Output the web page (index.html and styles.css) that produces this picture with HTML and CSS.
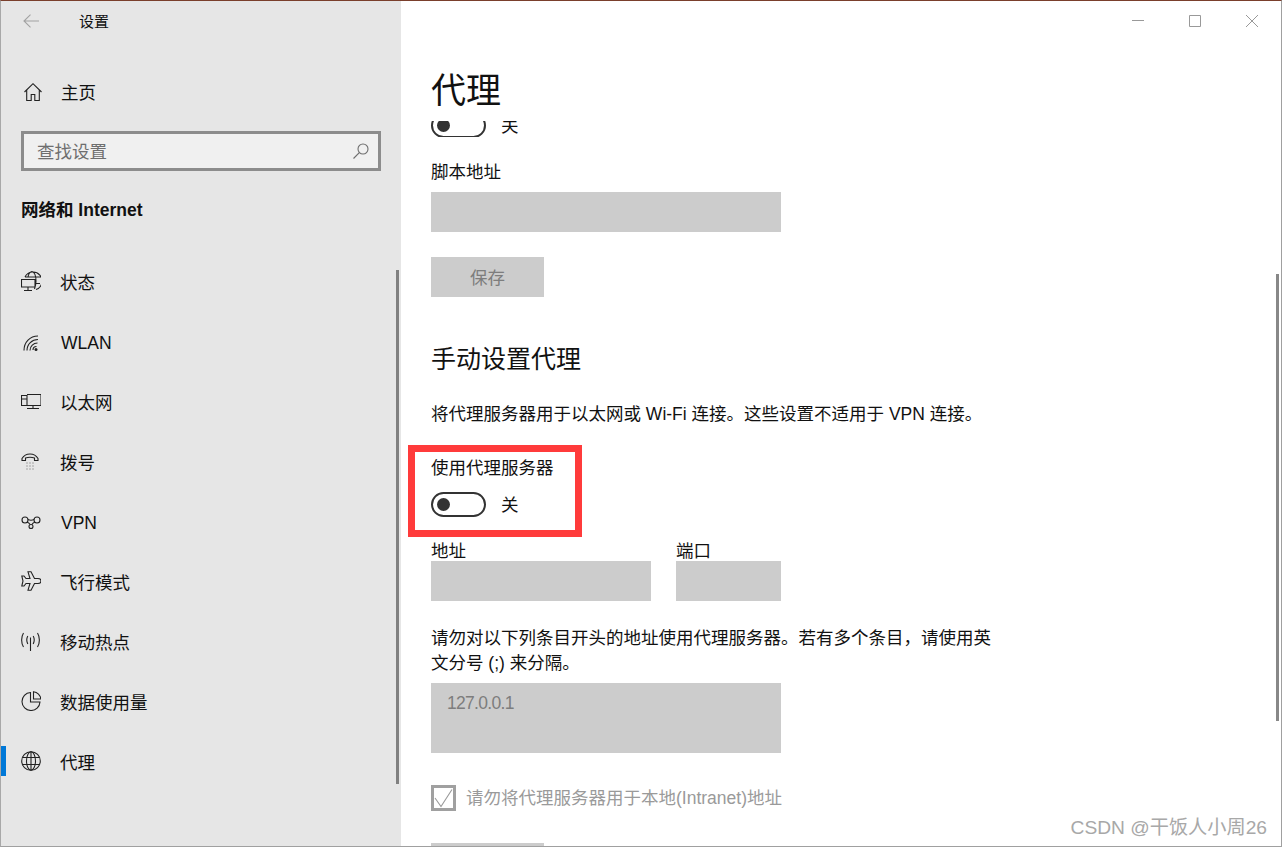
FILE: index.html
```html
<!DOCTYPE html>
<html lang="zh-CN">
<head>
<meta charset="utf-8">
<title>设置</title>
<link rel="stylesheet" href="styles.css">
</head>
<body>
<div class="window">
  <aside class="sidebar">
    <div class="titlebar">
      <svg class="back" width="16" height="14" viewBox="0 0 16 14"><path d="M7.500 .7 1 7l6.500 6.300M1 7h15" /></svg>
      <span class="apptitle">设置</span>
    </div>
    <div class="home">
      <svg class="ico" width="20" height="20" viewBox="0 0 20 20"><path d="M1.500 10 10 1.700 18.500 10M3.700 8v10.500h4.500v-6h3.600v6h4.500V8"/></svg>
      <span>主页</span>
    </div>
    <div class="search">
      <span class="search-text">查找设置</span>
      <svg class="search-ico" width="16" height="16" viewBox="0 0 16 16"><circle cx="10" cy="6" r="5"/><path d="M6.300 9.700 .5 15.500"/></svg>
    </div>
    <div class="group">网络和 Internet</div>
    <nav class="nav">
      <div class="item">
        <svg class="ico" width="20" height="20" viewBox="0 0 20 20"><path d="M4 6a9 9 0 1 1 11 12.500M7 6c.5-3 2-5 4-5.500 3 1 4 5 4 9.500 0 3-.5 5-1.500 8M4 6h15.500M15 12.500h4M.5 8.500h13.500v7.500H.5zM7 16v3M3 19.500h8"/></svg>
        <span>状态</span>
      </div>
      <div class="item">
        <svg class="ico" width="20" height="20" viewBox="0 0 20 20"><path d="M3 19.500C3 11 9 5 17 5M6 19.500C6 13 11 8.500 17 8.500M9 19.500C9 15 12.500 12 16.500 12M12 19C12 17 13.500 15.500 15.500 15.500"/><circle class="dot" cx="15" cy="18.500" r="1.500"/></svg>
        <span class="latin">WLAN</span>
      </div>
      <div class="item">
        <svg class="ico" width="20" height="20" viewBox="0 0 20 20"><path d="M.5 4.500h5.500v10H.5zM.5 8H6M6 3.500h14v11H6M12 14.500v3M6 17.500h12"/></svg>
        <span>以太网</span>
      </div>
      <div class="item">
        <svg class="ico" width="20" height="20" viewBox="0 0 20 20"><path d="M1 9.500V7.500C3 4 6 3 9 3s6 1 8 4.500v2h-3.500V7c-3-1-6-1-9 0v2.500z"/><path class="dots" d="M5.500 12h1M8.500 12h1M11.500 12h1M5.500 15h1M8.500 15h1M11.500 15h1M5.500 18h1M8.500 18h1M11.500 18h1"/></svg>
        <span>拨号</span>
      </div>
      <div class="item">
        <svg class="ico" width="20" height="20" viewBox="0 0 20 20"><circle cx="4" cy="9" r="3"/><circle cx="16" cy="9" r="3"/><circle cx="10" cy="15.500" r="2"/><path d="M7 8.500c2 1 4 1 6 0M6 11c1.500 .5 2.500 1 3 2.500M14 11c-1.500 .5-2.500 1-3 2.500"/></svg>
        <span class="latin">VPN</span>
      </div>
      <div class="item">
        <svg class="ico" width="20" height="20" viewBox="0 0 20 20"><path d="M7 .8h3l3.500 6.700h3.500c2 0 3 1 3 2.500s-1 2.500-3 2.500h-3.500L10 19.200H7l2-6.700H5L3 15H.8l1.200-5-1.200-5H3l2 2.500h4z"/></svg>
        <span>飞行模式</span>
      </div>
      <div class="item">
        <svg class="ico" width="20" height="20" viewBox="0 0 20 20"><path d="M9.500 6.500V20M6.800 5C5.500 7.500 5.500 10.500 6.800 13M12.200 5C13.500 7.500 13.500 10.500 12.200 13M2.500 2C0 6 0 12 2.500 16M16.500 2c2.500 4 2.500 10 0 14"/></svg>
        <span>移动热点</span>
      </div>
      <div class="item">
        <svg class="ico" width="20" height="20" viewBox="0 0 20 20"><path d="M9.500 1.500a9 9 0 1 0 9.500 9.500H9.500zM12.500 .7V8h7.300A8 8 0 0 0 12.500 .7z"/></svg>
        <span>数据使用量</span>
      </div>
      <div class="item active">
        <svg class="ico" width="20" height="20" viewBox="0 0 20 20"><circle cx="10" cy="10" r="9.300"/><ellipse cx="10" cy="10" rx="4.500" ry="9.300"/><path d="M10 .7V19.300M1.500 6.500h17M1.500 13.500h17"/></svg>
        <span>代理</span>
      </div>
    </nav>
    <div class="side-thumb"></div>
  </aside>
  <main class="content">
    <div class="winctl">
      <svg width="12" height="12" viewBox="0 0 12 12"><path d="M0 5.500h12"/></svg>
      <svg width="12" height="12" viewBox="0 0 12 12"><path d="M.5 .5h11v11H.5z"/></svg>
      <svg width="12" height="12" viewBox="0 0 12 12"><path d="M0 0l12 12M12 0L0 12"/></svg>
    </div>
    <h1 class="title">代理</h1>
    <div class="stub-row">
      <div class="toggle-row stub-inner">
        <span class="toggle"><i class="knob"></i></span>
        <span class="state">关</span>
      </div>
    </div>
    <div class="label script-label">脚本地址</div>
    <div class="field wide"></div>
    <div class="btn save">保存</div>
    <h2 class="section">手动设置代理</h2>
    <p class="desc">将代理服务器用于以太网或 Wi-Fi 连接。这些设置不适用于 VPN 连接。</p>
    <div class="highlight">
      <div class="label">使用代理服务器</div>
      <div class="toggle-row">
        <span class="toggle"><i class="knob"></i></span>
        <span class="state">关</span>
      </div>
    </div>
    <div class="addr">
      <div class="addr-col">
        <div class="label tight">地址</div>
        <div class="field a"></div>
      </div>
      <div class="addr-col">
        <div class="label tight">端口</div>
        <div class="field p"></div>
      </div>
    </div>
    <p class="desc para">请勿对以下列条目开头的地址使用代理服务器。若有多个条目，请使用英文分号 (;) 来分隔。</p>
    <div class="field area">127.0.0.1</div>
    <div class="check">
      <svg class="box" width="25" height="26" viewBox="0 0 25 26"><path class="box-b" d="M1.500 1.500h22v23h-22z"/><path class="box-c" d="M4 13l6 8.500 11-17"/></svg>
      <span>请勿将代理服务器用于本地(Intranet)地址</span>
    </div>
    <div class="btn peek"></div>
    <div class="watermark">CSDN @干饭人小周26</div>
    <div class="main-thumb"></div>
  </main>
</div>
</body>
</html>
```
FILE: styles.css
```css
* { box-sizing: border-box; }
html, body { margin: 0; height: 847px; overflow: hidden; background: #fff; }
body { font-family: "Liberation Sans", "Noto Sans CJK SC", sans-serif; color: #111; }
.window { display: flex; height: 847px; border-top: 1px solid #7a3f2c; border-bottom: 1px solid #a0a0a0; border-left: 1px solid #a8a8a8; border-right: 1px solid #a0a0a0; }

.sidebar { position: relative; width: 400px; flex: none; background: #e6e6e6; }
.titlebar { display: flex; align-items: center; height: 40px; padding-left: 22px; }
.back { fill: none; stroke: #a2a2a2; stroke-width: 1.100; }
.apptitle { margin-left: 40px; padding-top: 2px; font-size: 15px; line-height: 20px; color: #111; }
.home { display: flex; align-items: center; height: 30px; margin-top: 36px; padding-left: 22px; font-size: 17.500px; line-height: 24px; gap: 18px; }
.home span { padding-top: 2px; }
.ico { flex: none; fill: none; stroke: #222; stroke-width: 1.100; }
.ico .dot { fill: #222; stroke: none; }
.ico .dots { stroke: #666; stroke-width: 1; }
.search { display: flex; align-items: center; justify-content: space-between; margin: 24px 0 0 20px; width: 360px; height: 40px; border: 3px solid #8c8c8c; background: #f0f0f0; padding: 0 9px 0 13px; }
.search-text { padding-top: 2px; font-size: 17.500px; line-height: 24px; color: #6e6e6e; }
.search-ico { fill: none; stroke: #6e6e6e; stroke-width: 1.100; }
.group { margin: 27px 0 0 20px; height: 24px; line-height: 24px; font-size: 17.500px; font-weight: 700; color: #111; }

.nav { margin-top: 29px; }
.item { position: relative; display: flex; align-items: center; gap: 19px; height: 60px; padding-left: 20px; font-size: 17.500px; line-height: 24px; color: #111; }
.item span { padding-top: 4px; }
.item .latin { margin-left: 1px; }
.item.active::before { content: ""; position: absolute; left: 0; top: 15px; width: 5px; height: 30px; background: #0078d7; }
.side-thumb { position: absolute; left: 395px; top: 269px; width: 3px; height: 514px; background: #808080; }

.content { position: relative; flex: 1; min-width: 0; background: #fff; padding-left: 30px; overflow: hidden; }
.winctl { position: absolute; top: 14px; right: 23px; display: flex; gap: 45px; }
.winctl svg { fill: none; stroke: #999; stroke-width: 1; }
.title { margin: 66px 0 0; height: 48px; line-height: 48px; font-size: 35px; font-weight: 400; color: #111; }
.stub-row { height: 16px; margin-top: 6px; overflow: hidden; }
.stub-inner { margin-top: -9px; }
.toggle { display: flex; align-items: center; flex: none; width: 55px; height: 25px; border: 2.500px solid #333; border-radius: 13px; padding-left: 3.500px; }
.knob { display: block; width: 13px; height: 13px; border-radius: 50%; background: #333; }
.state { font-size: 17.500px; line-height: 24px; padding-top: 2px; color: #111; }
.toggle-row { display: flex; align-items: center; gap: 15px; }
.label { font-size: 17.500px; color: #111; line-height: 24px; height: 24px; }
.script-label { margin-top: 22px; line-height: 26px; }
.field { background: #cccccc; }
.wide { width: 350px; height: 40px; margin-top: 9px; }
.btn { background: #cccccc; color: #7d7d7d; }
.save { display: flex; align-items: center; justify-content: center; width: 113px; height: 40px; margin-top: 25px; padding-top: 2px; font-size: 17.500px; line-height: 24px; }
.section { margin: 47px 0 0; height: 32px; line-height: 30px; font-size: 25px; font-weight: 400; color: #111; }
.desc { margin: 0; font-size: 17.500px; line-height: 25px; color: #111; }
.section + .desc { margin-top: 26px; }
.highlight { width: 174px; height: 92px; margin: 18px 0 0 -23px; border: 7px solid #ff3b3b; padding: 4px 0 0 16px; }
.highlight .toggle-row { margin-top: 11px; }
.addr { display: flex; gap: 25px; margin-top: 3px; }
.tight { height: 21px; line-height: 22px; }
.a { width: 220px; height: 40px; }
.p { width: 105px; height: 40px; }
.para { width: 570px; margin-top: 25px; }
.area { width: 350px; height: 70px; margin-top: 7px; padding: 8px 16px; font-size: 17.500px; line-height: 24px; letter-spacing: -.7px; color: #7d7d7d; }
.check { display: flex; align-items: center; gap: 10px; margin-top: 32px; font-size: 17.500px; line-height: 24px; color: #9a9a9a; }
.box { flex: none; fill: none; }
.box-b { stroke: #a0a0a0; stroke-width: 3; }
.box-c { stroke: #9a9a9a; stroke-width: 1.100; }
.peek { width: 113px; height: 40px; margin-top: 32px; }
.watermark { position: absolute; right: 14px; bottom: 5px; font-size: 19.200px; line-height: 26px; color: #a8a8a8; background: rgba(255,255,255,.4); }
.main-thumb { position: absolute; right: 2px; top: 273px; width: 3px; height: 447px; background: #888; }
```
